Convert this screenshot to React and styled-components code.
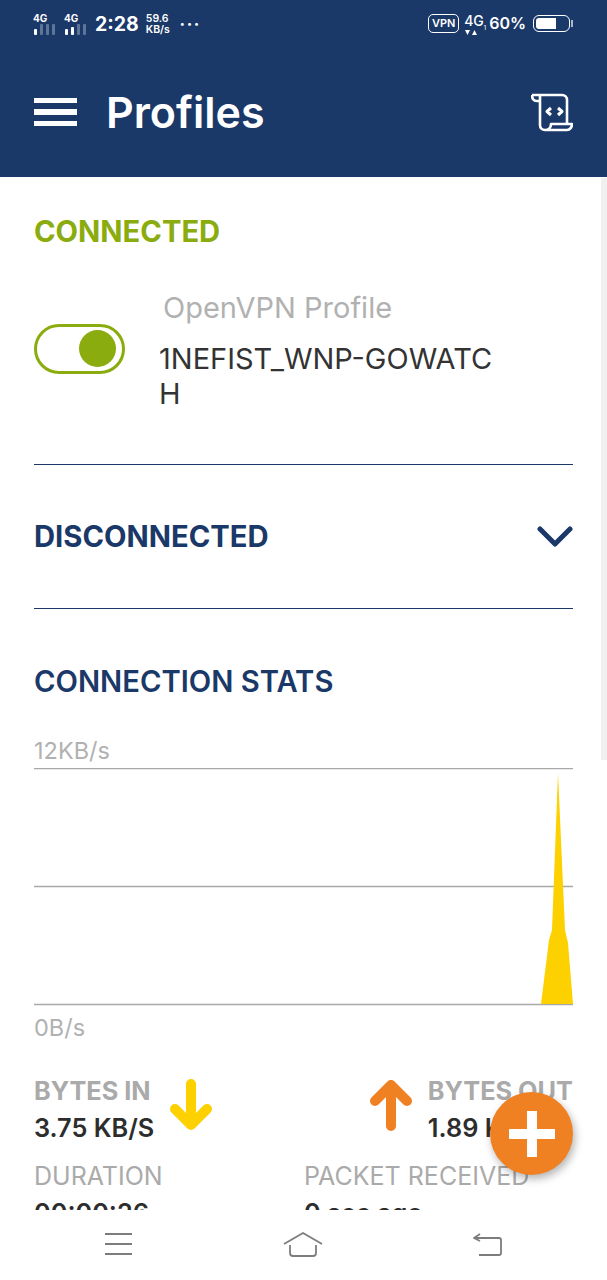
import React from "react";
import styled, { createGlobalStyle } from "styled-components";

const GlobalStyle = createGlobalStyle`
  html, body { margin: 0; padding: 0; background: #fff; }
  * { box-sizing: border-box; }
  body { font-family: Inter, "Liberation Sans", sans-serif; }
`;

const NAVY = "#1a3868";
const GREEN = "#8aac0e";
const YELLOW = "#fdd000";
const ORANGE = "#f08122";

function SignalBars({ filled }) {
  return (
    <svg width="24" height="11" viewBox="0 0 24 11">
      {[0, 1, 2, 3].map((i) => (
        <rect
          key={i}
          x={i * 6 + 1}
          y={i < filled ? 5 - i * 2 : 0}
          width="3"
          height={i < filled ? 6 + i * 2 : 11}
          rx="1"
          fill={i < filled ? "#fff" : "#5d7598"}
        />
      ))}
    </svg>
  );
}

function ScrollIcon() {
  return (
    <svg width="42" height="39" viewBox="0 0 42 39" fill="none" stroke="#fff" strokeWidth="2.6" strokeLinejoin="round">
      <path d="M1 2 H31 C34 2 36 4 36 7 V30" />
      <path d="M1 2 C1 6 3 8 6 8 H9" />
      <path d="M9 3 V32 C9 35 11 37 14 37 H36 C39 37 41 34 41 31 H20 C20 34 18 37 14 37" />
      <path d="M20 15 L16 18.5 L20 22 M27 15 L31 18.5 L27 22" strokeWidth="3" />
    </svg>
  );
}

function ArrowIcon({ color, up }) {
  return (
    <svg width="42" height="52" viewBox="0 0 42 52" fill="none" stroke={color} strokeWidth="10" strokeLinecap="round" strokeLinejoin="round">
      {up ? <path d="M21 47 V6 M5 22 L21 6 L37 22" /> : <path d="M21 5 V46 M5 30 L21 46 L37 30" />}
    </svg>
  );
}

function Chart() {
  return (
    <ChartSvg width="539" height="238" viewBox="0 0 539 238">
      {[0.5, 118.5, 236.5].map((y) => (
        <line key={y} x1="0" x2="539" y1={y} y2={y} stroke="#a9a9a9" strokeWidth="1.3" />
      ))}
      <path d="M507 236 L515 172 L518 162 L524 5 L531 162 L534 175 L539 236 Z" fill={YELLOW} />
    </ChartSvg>
  );
}

export default function App() {
  return (
    <Screen>
      <GlobalStyle />
      <Header>
        <StatusBar>
          <StatusGroup>
            <Network><small>4G</small><SignalBars filled={1} /></Network>
            <Network><small>4G</small><SignalBars filled={2} /></Network>
            <Clock>2:28</Clock>
            <Speed>59.6<br />KB/s</Speed>
            <Dots>•••</Dots>
          </StatusGroup>
          <StatusGroup>
            <VpnBadge>VPN</VpnBadge>
            <Carrier>
              <span>4G<sub>1</sub></span>
              <svg width="14" height="6" viewBox="0 0 14 6" fill="#fff">
                <path d="M1 0 H6 L3.5 5 Z M8 5 H13 L10.5 0 Z" />
              </svg>
            </Carrier>
            <Battery>60%</Battery>
            <BatteryShell><BatteryFill style={{ width: "64%" }} /></BatteryShell>
            <BatteryTip />
          </StatusGroup>
        </StatusBar>
        <Toolbar>
          <Burger><span /><span /><span /></Burger>
          <Title>Profiles</Title>
          <ScrollIcon />
        </Toolbar>
      </Header>

      <Content>
        <SectionTitle color={GREEN}>CONNECTED</SectionTitle>
        <ProfileRow>
          <Toggle><Knob /></Toggle>
          <ProfileText>
            <ProfileType>OpenVPN Profile</ProfileType>
            <ProfileName>1NEFIST_WNP-GOWATC<br />H</ProfileName>
          </ProfileText>
        </ProfileRow>
        <Divider />
        <CollapseRow>
          <SectionTitle color={NAVY}>DISCONNECTED</SectionTitle>
          <svg width="36" height="22" viewBox="0 0 36 22" fill="none" stroke={NAVY} strokeWidth="5" strokeLinecap="round" strokeLinejoin="round">
            <path d="M3 3 L18 18 L33 3" />
          </svg>
        </CollapseRow>
        <Divider />
        <StatsHead color={NAVY}>CONNECTION STATS</StatsHead>
        <AxisLabel top>12KB/s</AxisLabel>
        <Chart />
        <AxisLabel>0B/s</AxisLabel>
        <StatsGrid>
          <Stat>
            <div>
              <StatLabel>BYTES IN</StatLabel>
              <StatValue>3.75 KB/S</StatValue>
            </div>
            <ArrowIcon color={YELLOW} />
          </Stat>
          <Stat right>
            <ArrowIcon color={ORANGE} up />
            <div>
              <StatLabel>BYTES OUT</StatLabel>
              <StatValue>1.89 KB/S</StatValue>
            </div>
          </Stat>
          <div>
            <InfoLabel>DURATION</InfoLabel>
            <StatValue>00:00:26</StatValue>
          </div>
          <div>
            <InfoLabel>PACKET RECEIVED</InfoLabel>
            <StatValue>0 sec ago</StatValue>
          </div>
        </StatsGrid>
      </Content>

      <BottomNav>
        <svg width="27" height="22" viewBox="0 0 27 22" fill="none" stroke="#7d7d7d" strokeWidth="1.8">
          <path d="M0 1 H27 M0 11 H27 M0 21 H27" />
        </svg>
        <svg width="40" height="25" viewBox="0 0 40 25" fill="none" stroke="#7d7d7d" strokeWidth="1.8" strokeLinejoin="round">
          <path d="M1 12 L20 1 L39 12" />
          <path d="M7 13 V21 C7 23 8 24 10 24 H30 C32 24 33 23 33 21 V13" />
        </svg>
        <svg width="29" height="23" viewBox="0 0 29 23" fill="none" stroke="#7d7d7d" strokeWidth="1.8" strokeLinejoin="round">
          <path d="M1 5 H26 C27 5 28 6 28 7 V20 C28 21 27 22 26 22 H6" />
          <path d="M7 1 L1 5 L7 8" />
        </svg>
      </BottomNav>

      <ScrollThumb />
      <Fab>
        <svg width="48" height="48" viewBox="0 0 48 48" fill="none" stroke="#fff" strokeWidth="10">
          <path d="M24 1 V47 M1 24 H47" />
        </svg>
      </Fab>
    </Screen>
  );
}

const Screen = styled.div`
  position: relative;
  display: flex;
  flex-direction: column;
  width: 607px;
  height: 1280px;
  overflow: hidden;
  background: #fff;
`;

const Header = styled.header`
  display: flex;
  flex-direction: column;
  flex-shrink: 0;
  height: 177px;
  background: ${NAVY};
  color: #fff;
`;

const StatusBar = styled.div`
  display: flex;
  justify-content: space-between;
  align-items: center;
  height: 47px;
  padding: 0 34px 0 33px;
`;

const StatusGroup = styled.div`
  display: flex;
  align-items: center;
`;

const Network = styled.div`
  display: flex;
  flex-direction: column;
  width: 31px;
  margin-top: 1px;
  small {
    font-size: 10px;
    font-weight: 700;
    line-height: 10px;
    margin-bottom: 1px;
  }
`;

const Clock = styled.span`
  font-size: 19.5px;
  font-weight: 700;
`;

const Speed = styled.span`
  margin-left: 7px;
  font-size: 10.5px;
  font-weight: 600;
  line-height: 11px;
`;

const Dots = styled.span`
  margin-left: 10px;
  font-size: 9px;
  letter-spacing: 2px;
`;

const VpnBadge = styled.span`
  width: 31px;
  height: 19px;
  border: 1.5px solid #fff;
  border-radius: 5px;
  font-size: 11px;
  font-weight: 600;
  line-height: 16px;
  text-align: center;
`;

const Carrier = styled.span`
  display: flex;
  flex-direction: column;
  align-items: flex-start;
  gap: 2px;
  width: 18px;
  margin-left: 5px;
  margin-top: 4px;
  span {
    font-size: 14px;
    font-weight: 500;
    line-height: 12px;
    white-space: nowrap;
  }
  sub {
    font-size: 5.5px;
    line-height: 0;
  }
`;

const Battery = styled.span`
  margin-left: 7px;
  font-size: 16px;
  font-weight: 600;
`;

const BatteryShell = styled.span`
  display: block;
  width: 37px;
  height: 17px;
  margin-left: 7px;
  padding: 2px;
  border: 1.5px solid #fff;
  border-radius: 6px;
`;

const BatteryFill = styled.span`
  display: block;
  height: 100%;
  background: #fff;
  border-radius: 3px 0 0 3px;
`;

const BatteryTip = styled.span`
  display: block;
  width: 2px;
  height: 7px;
  margin-left: 1px;
  background: #aab6c9;
`;

const Toolbar = styled.div`
  display: flex;
  align-items: center;
  height: 130px;
  padding: 0 34px;
`;

const Burger = styled.div`
  display: flex;
  flex-direction: column;
  gap: 6px;
  width: 43px;
  margin-right: 29px;
  span {
    height: 5.5px;
    background: #fff;
  }
`;

const Title = styled.h1`
  flex: 1;
  margin: 0;
  font-size: 43px;
  font-weight: 600;
`;

const Content = styled.main`
  flex: 1;
  min-height: 0;
  overflow: hidden;
  padding: 38px 34px 0;
`;

const SectionTitle = styled.h2`
  margin: 0;
  color: ${(props) => props.color};
  font-size: 29.2px;
  font-weight: 700;
  line-height: 34px;
`;

const StatsHead = styled(SectionTitle)`
  margin-top: 56px;
  font-weight: 600;
`;

const ProfileRow = styled.div`
  display: flex;
  align-items: center;
  height: 215px;
`;

const Toggle = styled.div`
  display: flex;
  align-items: center;
  justify-content: flex-end;
  flex-shrink: 0;
  width: 91px;
  height: 50px;
  margin-right: 34px;
  margin-bottom: 16px;
  padding-right: 6.5px;
  border: 3.5px solid ${GREEN};
  border-radius: 25px;
`;

const Knob = styled.div`
  width: 37px;
  height: 37px;
  border-radius: 50%;
  background: ${GREEN};
`;

const ProfileText = styled.div`
  display: flex;
  flex-direction: column;
  margin-bottom: 12px;
`;

const ProfileType = styled.div`
  margin-left: 4px;
  color: #b1b1b1;
  font-size: 29px;
  line-height: 34px;
`;

const ProfileName = styled.div`
  margin-top: 16px;
  color: #333;
  font-size: 29px;
  line-height: 35px;
`;

const Divider = styled.hr`
  margin: 0;
  border: 0;
  border-top: 1.5px solid ${NAVY};
`;

const CollapseRow = styled.div`
  display: flex;
  justify-content: space-between;
  align-items: center;
  height: 143px;
`;

const AxisLabel = styled.div`
  margin: ${(props) => (props.top ? "38px 0 3px" : "8px 0 0")};
  color: #b1b1b1;
  font-size: 23.5px;
  line-height: 28px;
`;

const ChartSvg = styled.svg`
  display: block;
`;

const StatsGrid = styled.div`
  display: grid;
  grid-template-columns: 270px 269px;
  margin-top: 34px;
`;

const Stat = styled.div`
  display: flex;
  justify-content: ${(props) => (props.right ? "flex-end" : "flex-start")};
  gap: 16px;
  height: 85px;
  svg { margin-top: 3px; }
`;

const StatLabel = styled.div`
  color: #aaa;
  font-size: 25.3px;
  font-weight: 700;
  line-height: 30px;
`;

const StatValue = styled.div`
  margin-top: 7px;
  color: #2d2d2d;
  font-size: 25.3px;
  font-weight: 600;
  line-height: 30px;
`;

const InfoLabel = styled.div`
  color: #aaa;
  font-size: 25px;
  line-height: 30px;
`;

const BottomNav = styled.nav`
  display: flex;
  justify-content: space-between;
  align-items: center;
  flex-shrink: 0;
  height: 70px;
  padding: 0 105px 2px;
  background: #fff;
`;

const ScrollThumb = styled.div`
  position: absolute;
  top: 178px;
  right: 0;
  width: 6px;
  height: 582px;
  background: #f0f0f0;
`;

const Fab = styled.button`
  position: absolute;
  left: 490px;
  top: 1092px;
  display: flex;
  align-items: center;
  justify-content: center;
  width: 83px;
  height: 83px;
  padding: 0;
  border: 0;
  border-radius: 50%;
  background: ${ORANGE};
  box-shadow: 2px 4px 9px rgba(0, 0, 0, 0.3);
`;
